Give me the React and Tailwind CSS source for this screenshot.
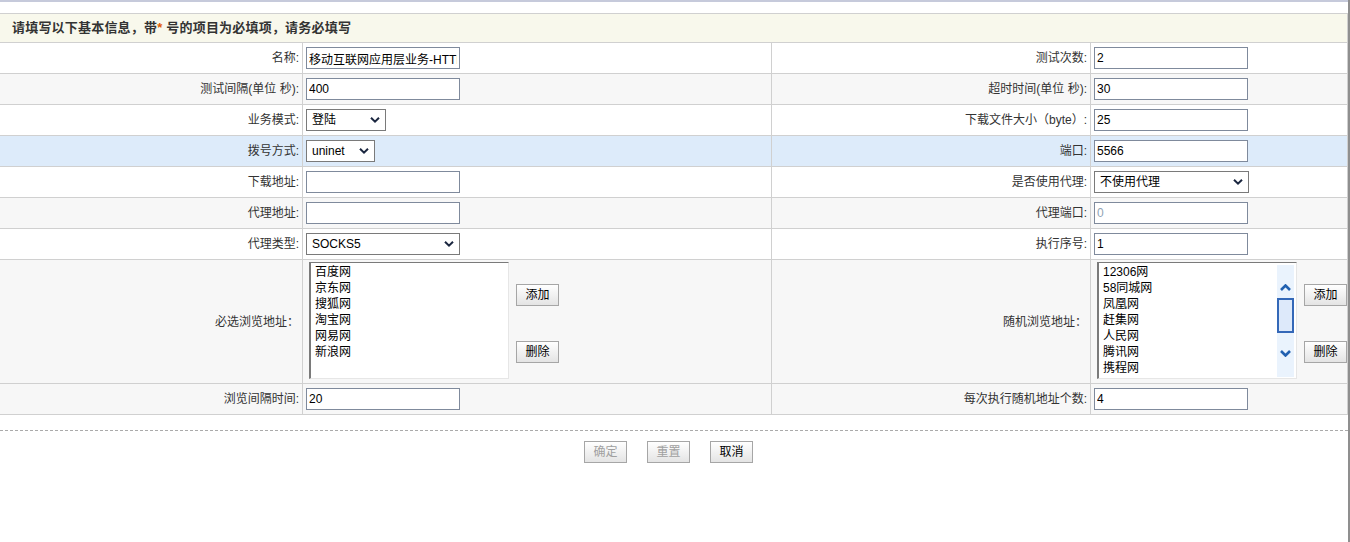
import React from 'react'

const Chevron = () => (
  <svg width="10" height="7" viewBox="0 0 10 7" className="absolute right-[6px] top-1/2 -translate-y-1/2 pointer-events-none">
    <path d="M1 1.2 L5 5.2 L9 1.2" fill="none" stroke="#1b2740" strokeWidth="2" />
  </svg>
)

function Input({ value = '', w = 'w-[154px]', disabled }) {
  return (
    <input
      readOnly
      value={value}
      className={`h-[22px] ${w} border border-[#7f8a9c] bg-white px-[2px] text-[12px] outline-none ${disabled ? 'text-[#8fa3b4]' : 'text-black'}`}
    />
  )
}

function Select({ value, w }) {
  return (
    <div className={`relative h-[22px] ${w}`}>
      <div className="h-full w-full border border-[#7a7a7a] bg-white pl-[5px] text-[12px] leading-[20px] text-black">{value}</div>
      <Chevron />
    </div>
  )
}

function Btn({ children, disabled }) {
  return (
    <div className={`flex h-[22px] w-[43px] items-center justify-center border border-[#a6a6a6] bg-gradient-to-b from-white to-[#e4e4e4] text-[12px] ${disabled ? 'text-[#a0a0a0]' : 'text-black'}`}>
      {children}
    </div>
  )
}

function Row({ bg, h = 'h-[31px]', l1, v1, l2, v2 }) {
  return (
    <div className={`flex ${h} border-b border-[#d0d0d0] ${bg}`}>
      <div className="flex w-[303px] shrink-0 items-center justify-end border-r border-[#d0d0d0] pr-[3px] text-[12px] text-[#333]">{l1}</div>
      <div className="flex w-[469px] shrink-0 items-center border-r border-[#d0d0d0] pl-[3px]">{v1}</div>
      <div className="flex w-[319px] shrink-0 items-center justify-end border-r border-[#d0d0d0] pr-[3px] text-[12px] text-[#333]">{l2}</div>
      <div className="flex w-[257px] shrink-0 items-center border-r border-[#d0d0d0] pl-[3px]">{v2}</div>
    </div>
  )
}

function ListBlock({ items, scroll }) {
  return (
    <div className="flex h-full items-start pl-[3px] pt-[2px]">
      <div className="flex h-[117px] w-[200px] border-l-2 border-t border-b border-r border-l-[#7a7a7a] border-t-[#7a7a7a] border-r-[#e6e6e6] border-b-[#e6e6e6] bg-white">
        <div className="flex-1 overflow-hidden pl-[4px] pt-[1px]">
          {items.map(i => (
            <div key={i} className="text-[12px] leading-[16px] text-black">{i}</div>
          ))}
        </div>
        {scroll && (
          <div className="mr-[2px] mt-[2px] flex h-[112px] w-[17px] flex-col items-center bg-[#eaf3fd] pt-[19px]">
            <svg width="11" height="7" viewBox="0 0 11 7"><path d="M1 6 L5.5 1.5 L10 6" fill="none" stroke="#2160b0" strokeWidth="2.6" /></svg>
            <div className="mt-[7px] h-[35px] w-full border-2 border-[#3468b8] bg-[#dde9fa]" />
            <svg width="11" height="7" viewBox="0 0 11 7" className="mt-[17px]"><path d="M1 1 L5.5 5.5 L10 1" fill="none" stroke="#2160b0" strokeWidth="2.6" /></svg>
          </div>
        )}
      </div>
      <div className="ml-[7px] mt-[22px] flex flex-col gap-[35px]">
        <Btn>添加</Btn>
        <Btn>删除</Btn>
      </div>
    </div>
  )
}

export default function App() {
  return (
    <div className="flex h-[542px] w-[1350px] bg-white font-['Liberation_Sans','Noto_Sans_CJK_SC',sans-serif]">
      <div className="w-[1348px]">
        <div className="h-[2px] bg-[#c6cadb]" />
        <div className="h-[11px]" />
        <div className="flex h-[30px] items-center border-y border-r border-[#d0d0d0] bg-[#f8f8ec] pl-[12px] text-[13px] font-bold tracking-[0.2px] text-[#333]">
          请填写以下基本信息，带<span className="text-[#e05a00]">*</span>&nbsp;号的项目为必填项，请务必填写
        </div>
        <Row bg="bg-white" l1="名称:" v1={<Input value="移动互联网应用层业务-HTTP" />} l2="测试次数:" v2={<Input value="2" />} />
        <Row bg="bg-[#f7f7f7]" l1="测试间隔(单位 秒):" v1={<Input value="400" />} l2="超时时间(单位 秒):" v2={<Input value="30" />} />
        <Row bg="bg-white" l1="业务模式:" v1={<Select value="登陆" w="w-[80px]" />} l2="下载文件大小（byte）:" v2={<Input value="25" />} />
        <Row bg="bg-[#ddebfa]" l1="拨号方式:" v1={<Select value="uninet" w="w-[69px]" />} l2="端口:" v2={<Input value="5566" />} />
        <Row bg="bg-white" l1="下载地址:" v1={<Input />} l2="是否使用代理:" v2={<Select value="不使用代理" w="w-[155px]" />} />
        <Row bg="bg-[#f7f7f7]" l1="代理地址:" v1={<Input />} l2="代理端口:" v2={<Input value="0" disabled />} />
        <Row bg="bg-white" l1="代理类型:" v1={<Select value="SOCKS5" w="w-[154px]" />} l2="执行序号:" v2={<Input value="1" />} />
        <Row
          bg="bg-[#f7f7f7]"
          h="h-[124px]"
          l1="必选浏览地址："
          v1={<ListBlock items={['百度网', '京东网', '搜狐网', '淘宝网', '网易网', '新浪网']} />}
          l2="随机浏览地址："
          v2={<ListBlock scroll items={['12306网', '58同城网', '凤凰网', '赶集网', '人民网', '腾讯网', '携程网']} />}
        />
        <Row bg="bg-[#f7f7f7]" l1="浏览间隔时间:" v1={<Input value="20" />} l2="每次执行随机地址个数:" v2={<Input value="4" />} />
        <div className="mt-[15px] border-t border-dashed border-[#aaaaaa]" />
        <div className="mt-[10px] flex justify-center gap-[20px] pr-[11px]">
          <Btn disabled>确定</Btn>
          <Btn disabled>重置</Btn>
          <Btn>取消</Btn>
        </div>
      </div>
      <div className="w-[2px] bg-[#8f8f8f]" />
    </div>
  )
}
